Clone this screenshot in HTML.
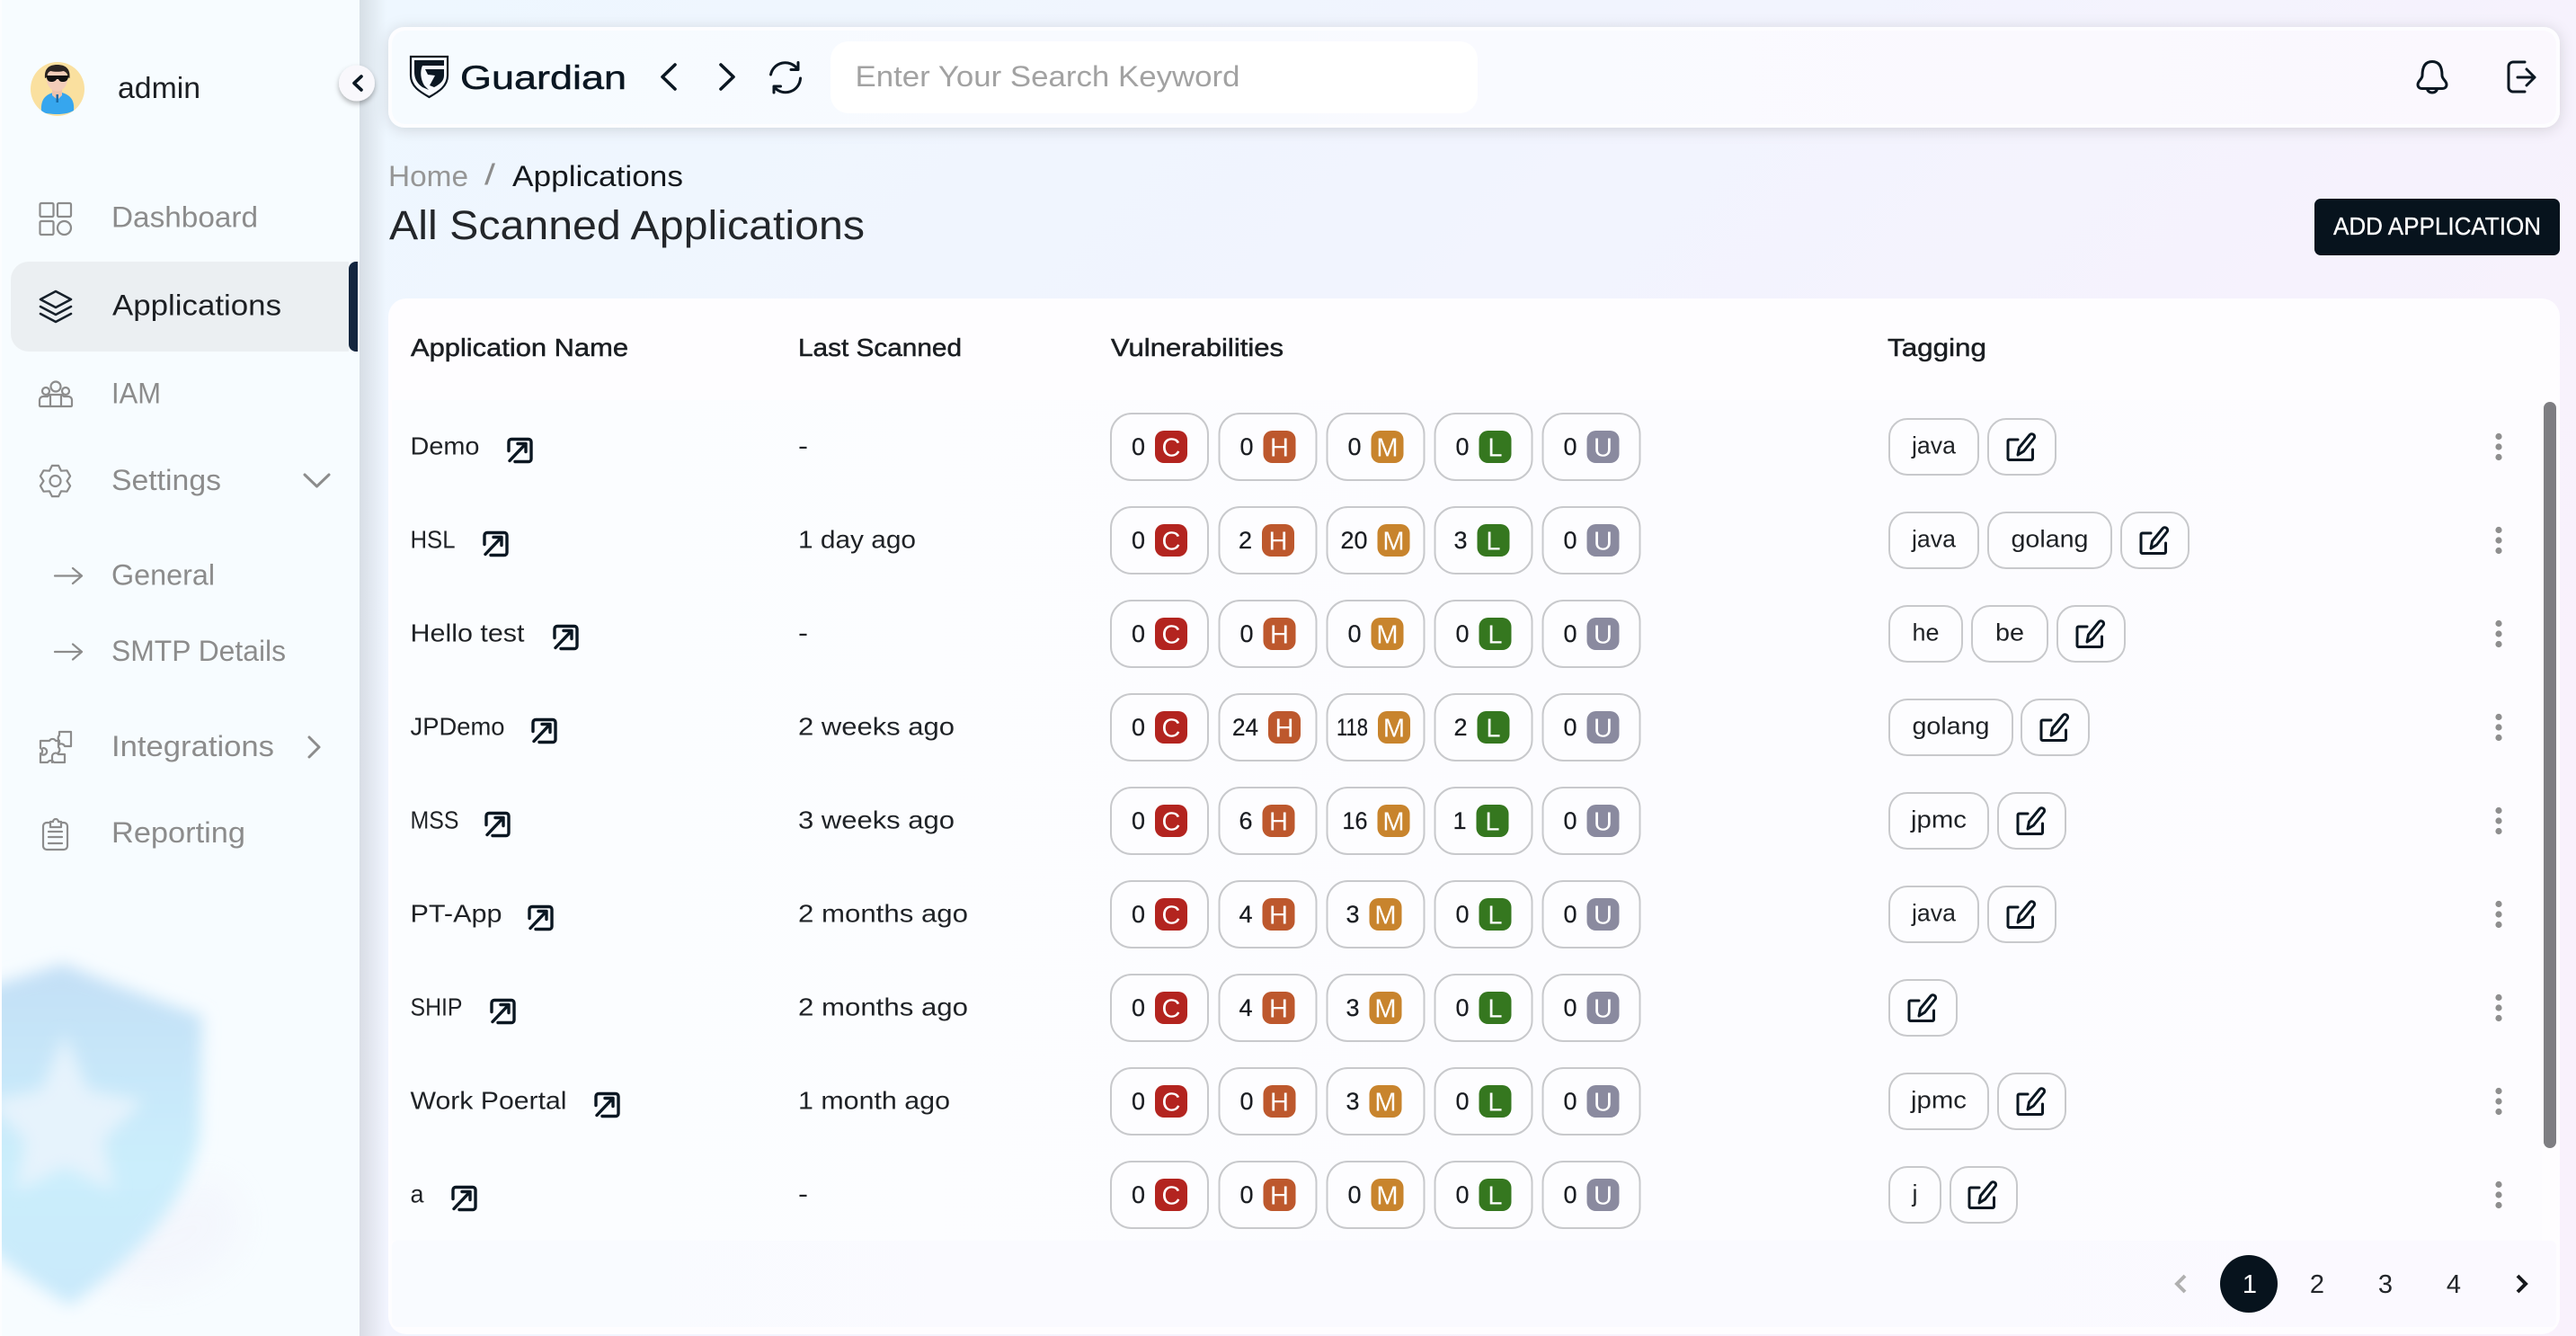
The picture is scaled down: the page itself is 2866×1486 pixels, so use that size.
<!DOCTYPE html>
<html lang="en">
<head>
<meta charset="utf-8">
<title>Guardian - Applications</title>
<style>
html,body{margin:0;padding:0;width:2866px;height:1486px;overflow:hidden;background:#f3f5fd}
svg{display:block;font-family:"Liberation Sans",Arial,sans-serif}
.nav{font-size:32px;fill:#8c8c8c;transform:translateX(-1px)}
.ic{fill:none;stroke:#8c8c8c;stroke-width:2.2;stroke-linecap:round;stroke-linejoin:round}
.dk{fill:none;stroke:#0b1722;stroke-width:3;stroke-linecap:round;stroke-linejoin:round}
.th{font-size:28px;fill:#1b1e22;stroke:#1b1e22;stroke-width:.5;transform:translateY(-1px)}
.td{font-size:28px;fill:#1f2226}
.n{font-size:27px;fill:#1a1d22;text-anchor:end;stroke:#1a1d22;stroke-width:.25;transform:translate(-1px,-.5px)}
.bt{font-size:29px;fill:#fff;text-anchor:middle}
rect.b{y:-17.5px;width:36px;height:36px;rx:10px}
.c{fill:#b3241f}.h{fill:#bd582d}.m{fill:#c8842d}.l{fill:#35771f}.u{fill:#8a8a9f}
.tg{fill:#fdfdff;stroke:#c8c9cc;stroke-width:2}
.tt{font-size:27px;fill:#1f2226;text-anchor:middle}
.pg{font-size:29px;fill:#23262a;text-anchor:middle}
.ext{fill:none;stroke:#0b1722;stroke-width:3.4;stroke-linecap:round;stroke-linejoin:round}
.ke{fill:#8e8e8e}
</style>
</head>
<body>
<svg xmlns="http://www.w3.org/2000/svg" width="2866" height="1486" viewBox="0 0 2866 1486">
<defs>
<linearGradient id="bg" x1="0" y1="0" x2="1" y2=".5"><stop offset="0" stop-color="#edf8ff"/><stop offset=".5" stop-color="#f1f4fe"/><stop offset="1" stop-color="#f9f1fc"/></linearGradient>
<linearGradient id="hd" x1="0" y1="0" x2="1" y2="0"><stop offset="0" stop-color="#f6fbff"/><stop offset=".5" stop-color="#f9faff"/><stop offset="1" stop-color="#fbf8fe"/></linearGradient>
<linearGradient id="rw" x1="0" y1="0" x2="1" y2="0"><stop offset="0" stop-color="#fbfdff"/><stop offset="1" stop-color="#fdfcff"/></linearGradient>
<linearGradient id="pg" x1="0" y1="0" x2="1" y2="0"><stop offset="0" stop-color="#f9fbff"/><stop offset="1" stop-color="#fbf9ff"/></linearGradient>
<linearGradient id="ss" x1="0" y1="0" x2="1" y2="0"><stop offset="0" stop-color="#000" stop-opacity=".1"/><stop offset="1" stop-color="#000" stop-opacity="0"/></linearGradient>
<linearGradient id="sh" x1="0" y1="0" x2="0" y2="1"><stop offset="0" stop-color="#c3dff6"/><stop offset=".6" stop-color="#cbeefc"/><stop offset="1" stop-color="#c9e9fb"/></linearGradient>
<filter id="b12" x="-30%" y="-30%" width="160%" height="160%"><feGaussianBlur stdDeviation="9"/></filter>
<filter id="b25" x="-30%" y="-30%" width="160%" height="160%"><feGaussianBlur stdDeviation="20"/></filter>
<filter id="hs" x="-5%" y="-40%" width="110%" height="180%"><feDropShadow dx="0" dy="2" stdDeviation="8" flood-color="#000" flood-opacity=".14"/></filter>
<filter id="bs" x="-60%" y="-60%" width="220%" height="220%"><feDropShadow dx="0" dy="3" stdDeviation="3" flood-color="#000" flood-opacity=".3"/></filter>
<clipPath id="sc"><rect x="2" y="0" width="398" height="1486"/></clipPath>
<clipPath id="av"><circle cx="64" cy="99" r="30"/></clipPath>
<rect id="f" x="1" y="-36.5" width="108" height="74" rx="23" fill="#fdfdff" stroke="#c8c9cc" stroke-width="2"/>
<g id="ex"><path class="ext" d="M2 15V5a3 3 0 0 1 3-3h19a3 3 0 0 1 3 3v19a3 3 0 0 1-3 3H9"/><path class="ext" d="M3 26 21 7M12 7h9v9" stroke-width="3"/></g>
<g id="ed" transform="translate(-2 -0.5)"><path class="dk" d="M13 8H3.5a1.5 1.5 0 0 0-1.5 1.5V29a1.5 1.5 0 0 0 1.500 1.500H28a1.500 1.500 0 0 0 1.500-1.500V19"/><path class="dk" stroke-width="2.6" d="M13 25l1.500-8L26 3a3 3 0 0 1 5 3.500L19.500 21z"/></g>
<g id="kb"><circle class="ke" cx="2780" cy="-11" r="3.600"/><circle class="ke" cx="2780" cy="0.500" r="3.600"/><circle class="ke" cx="2780" cy="12" r="3.600"/></g>
</defs>

<rect width="2866" height="1486" fill="url(#bg)"/>

<!-- Sidebar -->
<rect x="400" y="0" width="30" height="1486" fill="url(#ss)"/>
<rect x="0" y="0" width="400" height="1486" fill="#f7fcff"/>
<rect x="0" y="0" width="2" height="1486" fill="#fcfdff"/>
<g clip-path="url(#sc)">
  <path d="M30 1340C60 1420 170 1470 250 1400C280 1370 270 1330 240 1310L100 1360Z" fill="#eceaf8" opacity=".3" filter="url(#b25)"/>
  <path d="M-20 1100 Q30 1085 70 1072 Q150 1105 225 1130 L222 1265 Q205 1360 78 1452 Q0 1405 -30 1370Z" fill="url(#sh)" filter="url(#b12)"/>
  <path d="M72 1150 L98 1212 L160 1225 L115 1268 L128 1325 L72 1298 L18 1325 L28 1268 L-15 1225 L46 1212Z" fill="#e6f3fc" filter="url(#b12)"/>
</g>

<circle cx="64" cy="99" r="30" fill="#fae09f"/>
<g clip-path="url(#av)">
  <path d="M46 125c-1-13 3-19 13-22h10c10 3 14 9 13 20-5 3-12 4-18 4-7 0-13-1-18-2z" fill="#36a6ee"/>
  <path d="M58 96h11v10l-5 5-6-5z" fill="#eec3ae"/>
  <path d="M62.500 105h2.500v9h-2.500z" fill="#1a6aa5"/>
  <ellipse cx="63.500" cy="88" rx="11.500" ry="13.500" fill="#f3cdb9"/>
  <path d="M50 87c-1-11 5-15 13.500-15 9 0 15 4 14 15l-2-1c0-4-2-6-5-7-4 1-10 1-14 0-3 1-4 3-4 7z" fill="#2b2421"/>
  <path d="M52 84h24v2c-1 4-3 5-6 5s-4-1-5-3h-2c-1 2-3 3-6 3s-5-2-5-5z" fill="#111"/>
</g>
<text x="131" y="109" font-size="33" fill="#1c1f23" textLength="92" lengthAdjust="spacingAndGlyphs">admin</text>

<rect x="44.500" y="226" width="15" height="15" rx="1.500" class="ic"/><rect x="64" y="226" width="15" height="15" rx="1.500" class="ic"/><rect x="44.500" y="246" width="15" height="15" rx="1.500" class="ic"/><circle cx="71.500" cy="253.500" r="7.500" class="ic"/>
<text class="nav" x="125" y="252.500" textLength="163" lengthAdjust="spacingAndGlyphs">Dashboard</text>

<path d="M32 291H388V391H32A20 20 0 0 1 12 371V311A20 20 0 0 1 32 291Z" fill="#ebeff2"/>
<path d="M398 291H396A8 8 0 0 0 388 299V383A8 8 0 0 0 396 391H398Z" fill="#14263f"/>
<path d="M62 324 79 333 62 342 45 333ZM45 341 62 350 79 341M45 349 62 358 79 349" fill="none" stroke="#16202a" stroke-width="2.600" stroke-linejoin="round" stroke-linecap="round"/>
<text x="125" y="350.500" font-size="32" fill="#1c1f23" textLength="188" lengthAdjust="spacingAndGlyphs">Applications</text>

<g class="ic"><circle cx="62" cy="430" r="5.500"/><circle cx="51" cy="435" r="4"/><circle cx="73" cy="435" r="4"/><path d="M45 452a1 1 0 0 1-1-1v-6a4 4 0 0 1 4-4h5a4 4 0 0 1 3-2h12a4 4 0 0 1 3 2h5a4 4 0 0 1 4 4v6a1 1 0 0 1-1 1zM56 452v-13M68 452v-13"/></g>
<text class="nav" x="125" y="448.500" textLength="55" lengthAdjust="spacingAndGlyphs">IAM</text>

<g class="ic" transform="translate(61.500 535)"><path d="M-3.600-17.100 3.600-17.100 6.500-11.300 13-11.700 16.600-5.400 13 0 16.600 5.400 13 11.700 6.500 11.300 3.600 17.100-3.600 17.100-6.500 11.300-13 11.700-16.600 5.400-13 0-16.600-5.400-13-11.700-6.500-11.300Z"/><circle r="6"/></g>
<text class="nav" x="125" y="545" textLength="122" lengthAdjust="spacingAndGlyphs">Settings</text>
<path d="M339 528 352.500 541 366 528" fill="none" stroke="#8c8c8c" stroke-width="3" stroke-linecap="round" stroke-linejoin="round"/>

<path class="ic" d="M61 640.500H91M81 632l10 8.500-10 8.500"/>
<text class="nav" x="125" y="650.500" textLength="115" lengthAdjust="spacingAndGlyphs">General</text>
<path class="ic" d="M61 725H91M81 716.500 91 725l-10 8.500"/>
<text class="nav" x="125" y="735" textLength="194" lengthAdjust="spacingAndGlyphs">SMTP Details</text>

<g class="ic"><path d="M45 824H55a4 4 0 0 1 7 0h3v7a4 4 0 0 1 0 6v2H72v9H60a4 4 0 0 0-7 0H45v-9a4 4 0 0 0 0-7z"/><path d="M45 838a4 4 0 0 0 7-1 4 4 0 0 0-4-5M58 848v-7a4 4 0 0 1 7-2"/><path d="M66 814H79V830H72a4 4 0 0 0-6-2v-4a4 4 0 0 1 0-6z"/></g>
<text class="nav" x="125" y="841" textLength="181" lengthAdjust="spacingAndGlyphs">Integrations</text>
<path d="M344 820 355 831 344 842" fill="none" stroke="#8c8c8c" stroke-width="3" stroke-linecap="round" stroke-linejoin="round"/>

<g class="ic"><path d="M56 915H52a4 4 0 0 0-4 4v22a4 4 0 0 0 4 4H71a4 4 0 0 0 4-4V919a4 4 0 0 0-4-4H68"/><path d="M56 920V914H59a3 3 0 0 1 6 0H68V920Z"/><path d="M54 925H69M54 931H69M54 938H69"/></g>
<text class="nav" x="125" y="937" textLength="149" lengthAdjust="spacingAndGlyphs">Reporting</text>

<circle cx="397" cy="92.500" r="20" fill="#f9f8fc" filter="url(#bs)"/>
<path d="M402 85 394 92.500 402 100" fill="none" stroke="#0b1722" stroke-width="3.600" stroke-linecap="round" stroke-linejoin="round"/>

<!-- Top bar -->
<rect x="432" y="30" width="2416" height="112" rx="18" fill="#fdfdff" filter="url(#hs)"/>
<rect x="436" y="34" width="2408" height="104" rx="15" fill="url(#hd)"/>
<path d="M457 63H498V84C498 96 488 102 477.500 108 467 102 457 96 457 84Z" fill="#f8fbff" stroke="#0b1722" stroke-width="2.200"/>
<path d="M461 67H494V73H470C467 80 468 88 472 95L477 100 470 97C463 92 461 86 461 80ZM473 77H494V84C494 90 489 94 483 97L478 95 484 84 476 83Z" fill="#0b1722"/>
<text x="512" y="99" font-size="37" fill="#0b1722" stroke="#0b1722" stroke-width=".5" textLength="185" lengthAdjust="spacingAndGlyphs">Guardian</text>
<path d="M751 72 737 85.500 751 99M802 72 816 85.500 802 99" fill="none" stroke="#0b1722" stroke-width="3.600" stroke-linecap="round" stroke-linejoin="round"/>
<path class="dk" d="M857.500 83A16.500 16.500 0 0 1 887 76.500M888 69.500V77.500H880M890.500 87A16.500 16.500 0 0 1 861.500 97M861 103V96H868.500"/>
<rect x="924" y="46" width="720" height="80" rx="20" fill="#fff"/>
<text x="951.500" y="96" font-size="32" fill="#a2a2a2" textLength="428" lengthAdjust="spacingAndGlyphs">Enter Your Search Keyword</text>
<path class="dk" d="M2706 68.500C2696 68.500 2695 78 2695 84C2695 88 2690 90 2690 94C2690 97 2692 98.500 2695 98.500H2717C2720 98.500 2722 97 2722 94C2722 90 2717 88 2717 84C2717 78 2716 68.500 2706 68.500ZM2700.500 98.500a5.500 4.500 0 0 0 11 0"/>
<path class="dk" d="M2809 69H2796a5 5 0 0 0-5 5V97a5 5 0 0 0 5 5H2809M2801 86H2820M2811 77 2820 86 2811 95"/>

<!-- Title row -->
<text x="432" y="207" font-size="32" fill="#969696" textLength="89" lengthAdjust="spacingAndGlyphs">Home</text>
<text x="539" y="205" font-size="32" fill="#8c8c8c" textLength="12" lengthAdjust="spacingAndGlyphs">/</text>
<text x="570" y="207" font-size="32" fill="#14181d" textLength="190" lengthAdjust="spacingAndGlyphs">Applications</text>
<text x="433" y="266" font-size="45" fill="#23262a" textLength="529" lengthAdjust="spacingAndGlyphs">All Scanned Applications</text>
<rect x="2575" y="221" width="273" height="63" rx="7" fill="#07131d"/>
<text x="2596" y="261" font-size="28" fill="#fff" stroke="#fff" stroke-width=".3" textLength="231" lengthAdjust="spacingAndGlyphs">ADD APPLICATION</text>

<!-- Table card -->
<rect x="432" y="332" width="2416" height="1152" rx="20" fill="#fefdff"/>
<rect x="436" y="445" width="2392" height="935" fill="url(#rw)"/>
<rect x="436" y="1380" width="2408" height="96" rx="6" fill="url(#pg)"/>
<text class="th" x="457" y="397" textLength="242" lengthAdjust="spacingAndGlyphs">Application Name</text>
<text class="th" x="888" y="397" textLength="182" lengthAdjust="spacingAndGlyphs">Last Scanned</text>
<text class="th" x="1236" y="397" textLength="192" lengthAdjust="spacingAndGlyphs">Vulnerabilities</text>
<text class="th" x="2100" y="397" textLength="110" lengthAdjust="spacingAndGlyphs">Tagging</text>
<rect x="2830" y="447" width="14" height="830" rx="7" fill="#7e7e82"/>

<!-- Row 1 -->
<g transform="translate(0 496.500)">
<text class="td" x="456.500" y="9" textLength="77" lengthAdjust="spacingAndGlyphs">Demo</text><use href="#ex" x="564" y="-10"/>
<text class="td" x="888" y="9" textLength="11" lengthAdjust="spacingAndGlyphs">-</text>
<g transform="translate(1235)"><use href="#f"/><rect class="b c" x="50"/><text class="bt" x="68" y="11">C</text><text class="n" x="40" y="10">0</text></g>
<g transform="translate(1355.500)"><use href="#f"/><rect class="b h" x="50"/><text class="bt" x="68" y="11">H</text><text class="n" x="40" y="10">0</text></g>
<g transform="translate(1475.500)"><use href="#f"/><rect class="b m" x="50"/><text class="bt" x="68" y="11">M</text><text class="n" x="40" y="10">0</text></g>
<g transform="translate(1595.500)"><use href="#f"/><rect class="b l" x="50"/><text class="bt" x="68" y="11">L</text><text class="n" x="40" y="10">0</text></g>
<g transform="translate(1715.500)"><use href="#f"/><rect class="b u" x="50"/><text class="bt" x="68" y="11">U</text><text class="n" x="40" y="10">0</text></g>
<rect class="tg" x="2102" y="-30.500" width="99" height="62" rx="20"/><text class="tt" x="2151.500" y="8" textLength="49" lengthAdjust="spacingAndGlyphs">java</text>
<rect class="tg" x="2212" y="-30.500" width="75" height="62" rx="20"/><use href="#ed" x="2234" y="-15"/>
<use href="#kb"/>
</g>
<!-- Row 2 -->
<g transform="translate(0 600.500)">
<text class="td" x="456.500" y="9" textLength="50" lengthAdjust="spacingAndGlyphs">HSL</text><use href="#ex" x="537" y="-10"/>
<text class="td" x="888" y="9" textLength="131" lengthAdjust="spacingAndGlyphs">1 day ago</text>
<g transform="translate(1235)"><use href="#f"/><rect class="b c" x="50"/><text class="bt" x="68" y="11">C</text><text class="n" x="40" y="10">0</text></g>
<g transform="translate(1355.500)"><use href="#f"/><rect class="b h" x="48.500"/><text class="bt" x="66.500" y="11">H</text><text class="n" x="38.500" y="10">2</text></g>
<g transform="translate(1475.500)"><use href="#f"/><rect class="b m" x="57"/><text class="bt" x="75" y="11">M</text><text class="n" x="47" y="10" textLength="30" lengthAdjust="spacingAndGlyphs">20</text></g>
<g transform="translate(1595.500)"><use href="#f"/><rect class="b l" x="48"/><text class="bt" x="66" y="11">L</text><text class="n" x="38" y="10">3</text></g>
<g transform="translate(1715.500)"><use href="#f"/><rect class="b u" x="50"/><text class="bt" x="68" y="11">U</text><text class="n" x="40" y="10">0</text></g>
<rect class="tg" x="2102" y="-30.500" width="99" height="62" rx="20"/><text class="tt" x="2151.500" y="8" textLength="49" lengthAdjust="spacingAndGlyphs">java</text>
<rect class="tg" x="2212" y="-30.500" width="137" height="62" rx="20"/><text class="tt" x="2280.500" y="8" textLength="86" lengthAdjust="spacingAndGlyphs">golang</text>
<rect class="tg" x="2360" y="-30.500" width="75" height="62" rx="20"/><use href="#ed" x="2382" y="-15"/>
<use href="#kb"/>
</g>
<!-- Row 3 -->
<g transform="translate(0 704.500)">
<text class="td" x="456.500" y="9" textLength="127" lengthAdjust="spacingAndGlyphs">Hello test</text><use href="#ex" x="615" y="-10"/>
<text class="td" x="888" y="9" textLength="11" lengthAdjust="spacingAndGlyphs">-</text>
<g transform="translate(1235)"><use href="#f"/><rect class="b c" x="50"/><text class="bt" x="68" y="11">C</text><text class="n" x="40" y="10">0</text></g>
<g transform="translate(1355.500)"><use href="#f"/><rect class="b h" x="50"/><text class="bt" x="68" y="11">H</text><text class="n" x="40" y="10">0</text></g>
<g transform="translate(1475.500)"><use href="#f"/><rect class="b m" x="50"/><text class="bt" x="68" y="11">M</text><text class="n" x="40" y="10">0</text></g>
<g transform="translate(1595.500)"><use href="#f"/><rect class="b l" x="50"/><text class="bt" x="68" y="11">L</text><text class="n" x="40" y="10">0</text></g>
<g transform="translate(1715.500)"><use href="#f"/><rect class="b u" x="50"/><text class="bt" x="68" y="11">U</text><text class="n" x="40" y="10">0</text></g>
<rect class="tg" x="2102" y="-30.500" width="81" height="62" rx="20"/><text class="tt" x="2142.500" y="8" textLength="30" lengthAdjust="spacingAndGlyphs">he</text>
<rect class="tg" x="2194" y="-30.500" width="84" height="62" rx="20"/><text class="tt" x="2236" y="8" textLength="32" lengthAdjust="spacingAndGlyphs">be</text>
<rect class="tg" x="2289" y="-30.500" width="75" height="62" rx="20"/><use href="#ed" x="2311" y="-15"/>
<use href="#kb"/>
</g>
<!-- Row 4 -->
<g transform="translate(0 808.500)">
<text class="td" x="456.500" y="9" textLength="105" lengthAdjust="spacingAndGlyphs">JPDemo</text><use href="#ex" x="591" y="-10"/>
<text class="td" x="888" y="9" textLength="174" lengthAdjust="spacingAndGlyphs">2 weeks ago</text>
<g transform="translate(1235)"><use href="#f"/><rect class="b c" x="50"/><text class="bt" x="68" y="11">C</text><text class="n" x="40" y="10">0</text></g>
<g transform="translate(1355.500)"><use href="#f"/><rect class="b h" x="55.500"/><text class="bt" x="73.500" y="11">H</text><text class="n" x="45.500" y="10" textLength="29" lengthAdjust="spacingAndGlyphs">24</text></g>
<g transform="translate(1475.500)"><use href="#f"/><rect class="b m" x="57.500"/><text class="bt" x="75.500" y="11">M</text><text class="n" x="47.500" y="10" textLength="35" lengthAdjust="spacingAndGlyphs">118</text></g>
<g transform="translate(1595.500)"><use href="#f"/><rect class="b l" x="48"/><text class="bt" x="66" y="11">L</text><text class="n" x="38" y="10">2</text></g>
<g transform="translate(1715.500)"><use href="#f"/><rect class="b u" x="50"/><text class="bt" x="68" y="11">U</text><text class="n" x="40" y="10">0</text></g>
<rect class="tg" x="2102" y="-30.500" width="137" height="62" rx="20"/><text class="tt" x="2170.500" y="8" textLength="86" lengthAdjust="spacingAndGlyphs">golang</text>
<rect class="tg" x="2249" y="-30.500" width="75" height="62" rx="20"/><use href="#ed" x="2271" y="-15"/>
<use href="#kb"/>
</g>
<!-- Row 5 -->
<g transform="translate(0 912.500)">
<text class="td" x="456.500" y="9" textLength="54" lengthAdjust="spacingAndGlyphs">MSS</text><use href="#ex" x="539" y="-10"/>
<text class="td" x="888" y="9" textLength="174" lengthAdjust="spacingAndGlyphs">3 weeks ago</text>
<g transform="translate(1235)"><use href="#f"/><rect class="b c" x="50"/><text class="bt" x="68" y="11">C</text><text class="n" x="40" y="10">0</text></g>
<g transform="translate(1355.500)"><use href="#f"/><rect class="b h" x="49"/><text class="bt" x="67" y="11">H</text><text class="n" x="39" y="10">6</text></g>
<g transform="translate(1475.500)"><use href="#f"/><rect class="b m" x="57"/><text class="bt" x="75" y="11">M</text><text class="n" x="47" y="10" textLength="28" lengthAdjust="spacingAndGlyphs">16</text></g>
<g transform="translate(1595.500)"><use href="#f"/><rect class="b l" x="47"/><text class="bt" x="65" y="11">L</text><text class="n" x="37" y="10">1</text></g>
<g transform="translate(1715.500)"><use href="#f"/><rect class="b u" x="50"/><text class="bt" x="68" y="11">U</text><text class="n" x="40" y="10">0</text></g>
<rect class="tg" x="2102" y="-30.500" width="110" height="62" rx="20"/><text class="tt" x="2157" y="8" textLength="62" lengthAdjust="spacingAndGlyphs">jpmc</text>
<rect class="tg" x="2223" y="-30.500" width="75" height="62" rx="20"/><use href="#ed" x="2245" y="-15"/>
<use href="#kb"/>
</g>
<!-- Row 6 -->
<g transform="translate(0 1016.500)">
<text class="td" x="456.500" y="9" textLength="102" lengthAdjust="spacingAndGlyphs">PT-App</text><use href="#ex" x="587" y="-10"/>
<text class="td" x="888" y="9" textLength="189" lengthAdjust="spacingAndGlyphs">2 months ago</text>
<g transform="translate(1235)"><use href="#f"/><rect class="b c" x="50"/><text class="bt" x="68" y="11">C</text><text class="n" x="40" y="10">0</text></g>
<g transform="translate(1355.500)"><use href="#f"/><rect class="b h" x="49"/><text class="bt" x="67" y="11">H</text><text class="n" x="39" y="10">4</text></g>
<g transform="translate(1475.500)"><use href="#f"/><rect class="b m" x="48"/><text class="bt" x="66" y="11">M</text><text class="n" x="38" y="10">3</text></g>
<g transform="translate(1595.500)"><use href="#f"/><rect class="b l" x="50"/><text class="bt" x="68" y="11">L</text><text class="n" x="40" y="10">0</text></g>
<g transform="translate(1715.500)"><use href="#f"/><rect class="b u" x="50"/><text class="bt" x="68" y="11">U</text><text class="n" x="40" y="10">0</text></g>
<rect class="tg" x="2102" y="-30.500" width="99" height="62" rx="20"/><text class="tt" x="2151.500" y="8" textLength="49" lengthAdjust="spacingAndGlyphs">java</text>
<rect class="tg" x="2212" y="-30.500" width="75" height="62" rx="20"/><use href="#ed" x="2234" y="-15"/>
<use href="#kb"/>
</g>
<!-- Row 7 -->
<g transform="translate(0 1120.500)">
<text class="td" x="456.500" y="9" textLength="58" lengthAdjust="spacingAndGlyphs">SHIP</text><use href="#ex" x="545" y="-10"/>
<text class="td" x="888" y="9" textLength="189" lengthAdjust="spacingAndGlyphs">2 months ago</text>
<g transform="translate(1235)"><use href="#f"/><rect class="b c" x="50"/><text class="bt" x="68" y="11">C</text><text class="n" x="40" y="10">0</text></g>
<g transform="translate(1355.500)"><use href="#f"/><rect class="b h" x="49"/><text class="bt" x="67" y="11">H</text><text class="n" x="39" y="10">4</text></g>
<g transform="translate(1475.500)"><use href="#f"/><rect class="b m" x="48"/><text class="bt" x="66" y="11">M</text><text class="n" x="38" y="10">3</text></g>
<g transform="translate(1595.500)"><use href="#f"/><rect class="b l" x="50"/><text class="bt" x="68" y="11">L</text><text class="n" x="40" y="10">0</text></g>
<g transform="translate(1715.500)"><use href="#f"/><rect class="b u" x="50"/><text class="bt" x="68" y="11">U</text><text class="n" x="40" y="10">0</text></g>
<rect class="tg" x="2102" y="-30.500" width="75" height="62" rx="20"/><use href="#ed" x="2124" y="-15"/>
<use href="#kb"/>
</g>
<!-- Row 8 -->
<g transform="translate(0 1224.500)">
<text class="td" x="456.500" y="9" textLength="174" lengthAdjust="spacingAndGlyphs">Work Poertal</text><use href="#ex" x="661" y="-10"/>
<text class="td" x="888" y="9" textLength="169" lengthAdjust="spacingAndGlyphs">1 month ago</text>
<g transform="translate(1235)"><use href="#f"/><rect class="b c" x="50"/><text class="bt" x="68" y="11">C</text><text class="n" x="40" y="10">0</text></g>
<g transform="translate(1355.500)"><use href="#f"/><rect class="b h" x="50"/><text class="bt" x="68" y="11">H</text><text class="n" x="40" y="10">0</text></g>
<g transform="translate(1475.500)"><use href="#f"/><rect class="b m" x="48"/><text class="bt" x="66" y="11">M</text><text class="n" x="38" y="10">3</text></g>
<g transform="translate(1595.500)"><use href="#f"/><rect class="b l" x="50"/><text class="bt" x="68" y="11">L</text><text class="n" x="40" y="10">0</text></g>
<g transform="translate(1715.500)"><use href="#f"/><rect class="b u" x="50"/><text class="bt" x="68" y="11">U</text><text class="n" x="40" y="10">0</text></g>
<rect class="tg" x="2102" y="-30.500" width="110" height="62" rx="20"/><text class="tt" x="2157" y="8" textLength="62" lengthAdjust="spacingAndGlyphs">jpmc</text>
<rect class="tg" x="2223" y="-30.500" width="75" height="62" rx="20"/><use href="#ed" x="2245" y="-15"/>
<use href="#kb"/>
</g>
<!-- Row 9 -->
<g transform="translate(0 1328.500)">
<text class="td" x="456.500" y="9" textLength="15" lengthAdjust="spacingAndGlyphs">a</text><use href="#ex" x="502" y="-10"/>
<text class="td" x="888" y="9" textLength="11" lengthAdjust="spacingAndGlyphs">-</text>
<g transform="translate(1235)"><use href="#f"/><rect class="b c" x="50"/><text class="bt" x="68" y="11">C</text><text class="n" x="40" y="10">0</text></g>
<g transform="translate(1355.500)"><use href="#f"/><rect class="b h" x="50"/><text class="bt" x="68" y="11">H</text><text class="n" x="40" y="10">0</text></g>
<g transform="translate(1475.500)"><use href="#f"/><rect class="b m" x="50"/><text class="bt" x="68" y="11">M</text><text class="n" x="40" y="10">0</text></g>
<g transform="translate(1595.500)"><use href="#f"/><rect class="b l" x="50"/><text class="bt" x="68" y="11">L</text><text class="n" x="40" y="10">0</text></g>
<g transform="translate(1715.500)"><use href="#f"/><rect class="b u" x="50"/><text class="bt" x="68" y="11">U</text><text class="n" x="40" y="10">0</text></g>
<rect class="tg" x="2102" y="-30.500" width="57" height="62" rx="20"/><text class="tt" x="2130.500" y="8">j</text>
<rect class="tg" x="2170" y="-30.500" width="74" height="62" rx="20"/><use href="#ed" x="2191" y="-15"/>
<use href="#kb"/>
</g>

<!-- Pagination -->
<path d="M2431 1419 2422 1428 2431 1437" fill="none" stroke="#b0b0b0" stroke-width="4" stroke-linejoin="miter"/>
<circle cx="2502" cy="1428" r="32" fill="#07131d"/>
<text class="pg" x="2503" y="1438" style="fill:#fff">1</text>
<text class="pg" x="2578" y="1438">2</text>
<text class="pg" x="2654" y="1438">3</text>
<text class="pg" x="2730" y="1438">4</text>
<path d="M2801 1419 2810 1428 2801 1437" fill="none" stroke="#17191d" stroke-width="4" stroke-linejoin="miter"/>
</svg>
</body>
</html>
